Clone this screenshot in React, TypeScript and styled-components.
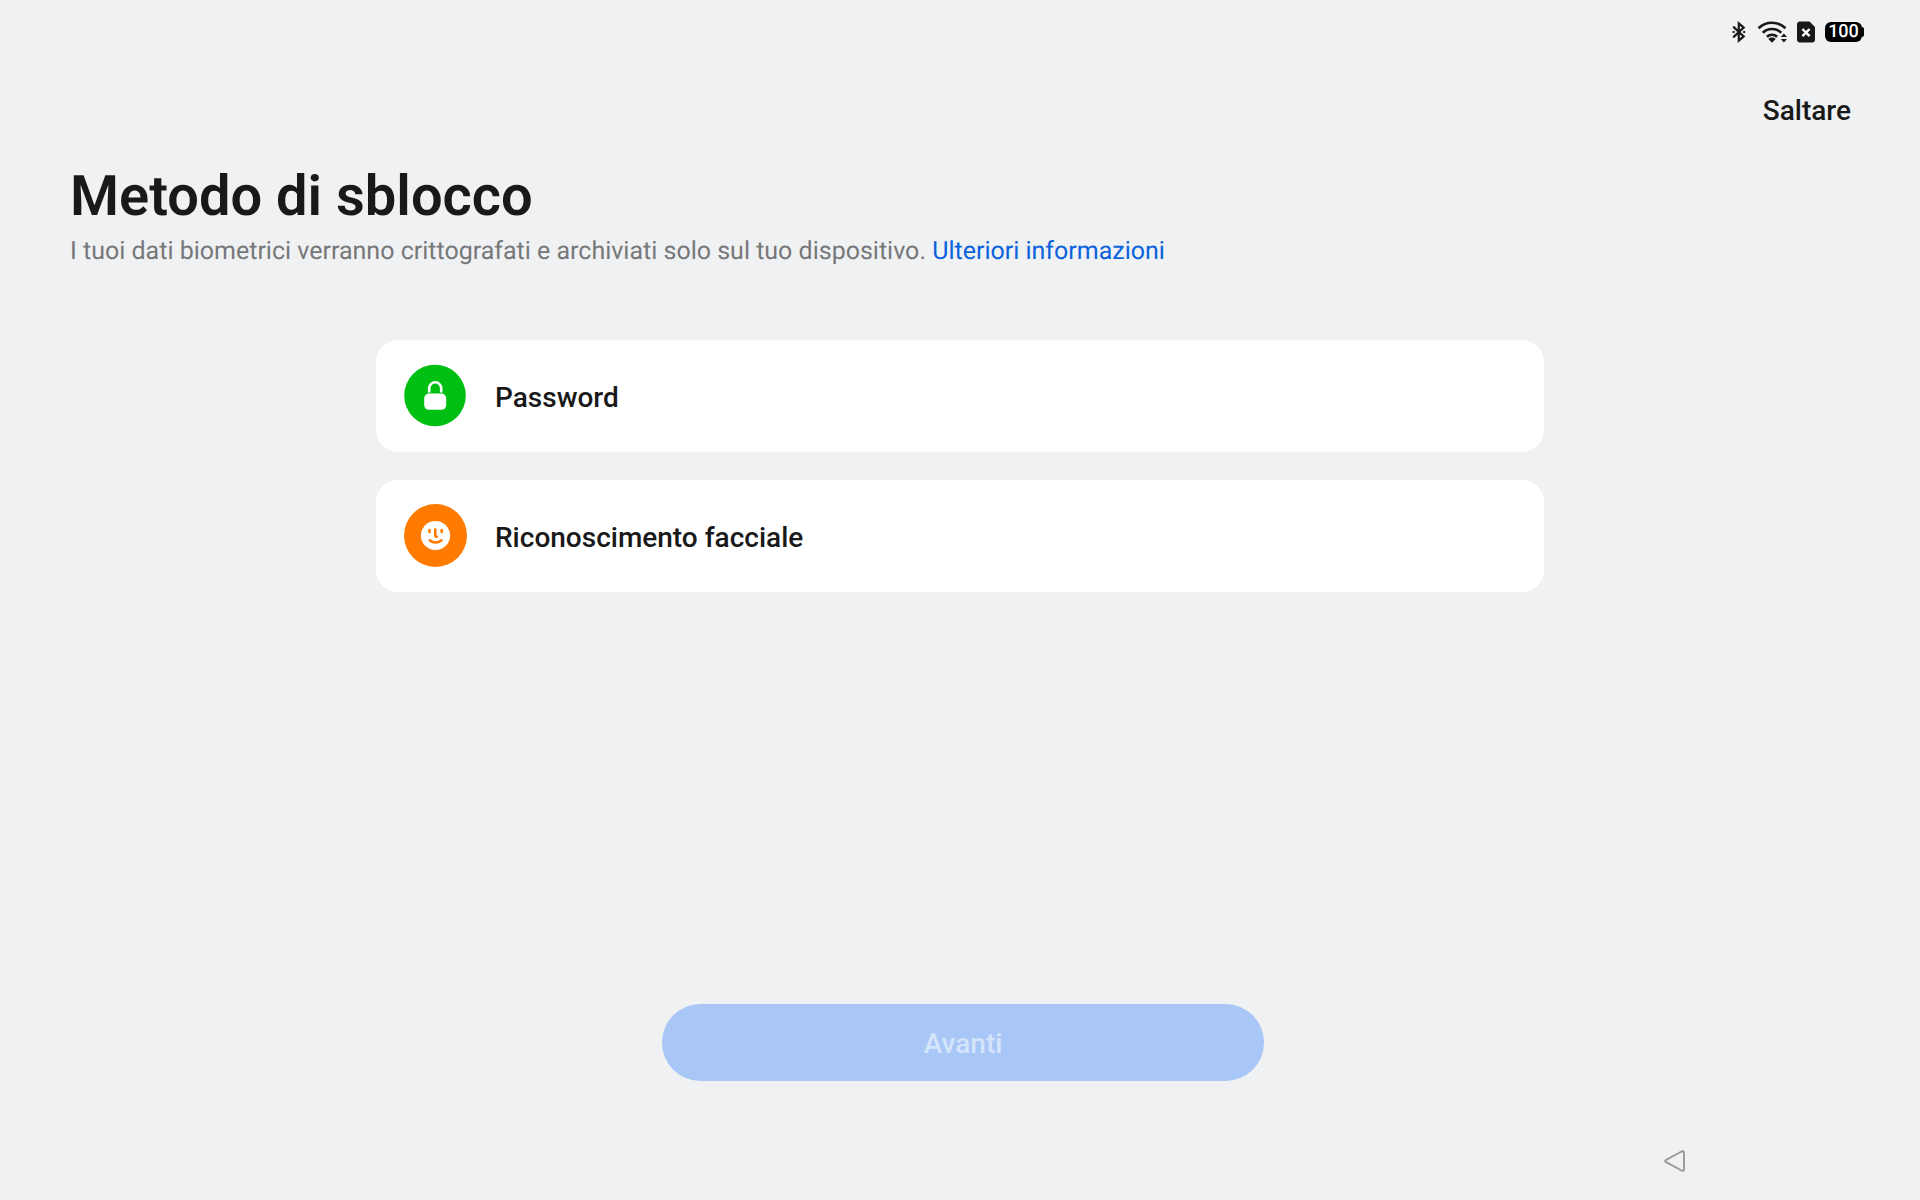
import React from 'react';
import styled, { createGlobalStyle } from 'styled-components';

const GlobalStyle = createGlobalStyle`
  *, *::before, *::after { box-sizing: border-box; }
  body {
    margin: 0;
    background: #eff1f3;
    color: #191919;
    font-family: Roboto, "Noto Sans", sans-serif;
    text-rendering: geometricPrecision;
    -webkit-font-smoothing: antialiased;
  }
  button { font: inherit; color: inherit; border: 0; cursor: pointer; }
  svg { display: block; flex: none; }
`;

const Screen = styled.div`
  display: flex;
  flex-direction: column;
  min-height: 100vh;
`;

const StatusBar = styled.div`
  display: flex;
  justify-content: flex-end;
  align-items: center;
  height: 63px;
  padding: 0 56px 0 0;
`;

const StatusIcons = styled.div`
  display: flex;
  align-items: center;
  gap: 10px;
`;

const Battery = styled.div`
  display: flex;
  align-items: center;
`;

const BatteryLevel = styled.span`
  display: block;
  width: 37px;
  border-radius: 6px;
  background: #000;
  color: #fff;
  font-size: 18px;
  font-weight: 500;
  line-height: 20px;
  text-align: center;
`;

const BatteryTip = styled.span`
  width: 2px;
  height: 10px;
  border-radius: 0 2px 2px 0;
  background: #000;
`;

const TopBar = styled.header`
  display: flex;
  justify-content: flex-end;
  padding: 30px 69px 0;
`;

const SkipButton = styled.button`
  padding: 0;
  background: none;
  font-size: 28px;
  font-weight: 500;
  line-height: 36px;
`;

const Heading = styled.div`
  padding: 31px 70px 0;
`;

const Title = styled.h1`
  margin: 0;
  font-size: 56px;
  font-weight: 600;
  line-height: 72px;
`;

const Description = styled.p`
  margin: 0;
  color: #767779;
  font-size: 25px;
  line-height: 40px;
`;

const MoreLink = styled.a`
  color: #0b62dd;
  text-decoration: none;
`;

const Methods = styled.main`
  display: flex;
  flex: 1;
  flex-direction: column;
  gap: 28px;
  width: 61%;
  max-width: 1168px;
  margin: 0 auto;
  padding: 68px 0 40px;
`;

const MethodButton = styled.button`
  display: flex;
  align-items: center;
  gap: 28px;
  height: 112px;
  padding: 0 28px 2px;
  border-radius: 22px;
  background: #fff;
  font-size: 28px;
  font-weight: 500;
  line-height: 36px;
  text-align: left;
`;

const MethodLabel = styled.span`
  padding-top: 5px;
`;

const Footer = styled.footer`
  display: flex;
  justify-content: center;
  padding: 0 0 0 6px;
`;

const NextButton = styled.button`
  width: 602px;
  max-width: 90%;
  height: 77px;
  padding: 2px 0 0;
  border-radius: 39px;
  background: #a8c6f6;
  color: #d4e4fb;
  font-size: 28px;
  font-weight: 500;
  cursor: default;
`;

const NavBar = styled.nav`
  display: flex;
  justify-content: flex-end;
  align-items: flex-end;
  height: 119px;
  padding: 0 234px 28px 0;
`;

const BackButton = styled.button`
  padding: 0;
  background: none;
`;

function BluetoothIcon() {
  return (
    <svg width="15" height="22" viewBox="0 0 15 22" fill="none" stroke="#191919" strokeWidth="2.200">
      <path d="M1.200 5.600 11.700 15.400 6.800 19.600V2.400l4.900 4.200L1.200 16.400" />
      <path d="M.6 11h2M11.200 11h2" strokeWidth="1.800" />
    </svg>
  );
}

function WifiIcon() {
  return (
    <svg width="30" height="22" viewBox="0 0 30 22" fill="none" stroke="#191919" strokeWidth="2.700">
      <path d="M1.500 7.300C9-.1 21-.1 28.500 7.300" />
      <path d="M5.800 11.800c5.100-5.100 13.300-5.100 18.400 0" />
      <path d="M9.900 15.800c3-2.700 7.200-2.700 10.200 0" />
      <path d="M15 21.800 11.300 18c2.200-1.900 5.200-1.900 7.400 0z" fill="#191919" stroke="none" />
      <path d="M26.900 12.600 30 16h-6.200zM26.900 21.400 30 18h-6.200z" fill="#191919" stroke="none" />
    </svg>
  );
}

function SimErrorIcon() {
  return (
    <svg width="18" height="22" viewBox="0 0 18 22">
      <path d="M3 .5h9.500L18 6v12.500a3 3 0 0 1-3 3H3a3 3 0 0 1-3-3v-15a3 3 0 0 1 3-3z" fill="#191919" />
      <path d="m5.400 8 7.200 7.200m0-7.200-7.200 7.200" stroke="#fff" strokeWidth="2.400" />
    </svg>
  );
}

function PasswordIcon() {
  return (
    <svg width="63" height="63" viewBox="0 0 63 63">
      <circle cx="31" cy="31.500" r="30.800" fill="#00bf13" />
      <path d="M25.200 28.600v-4.300a6 6 0 0 1 12 0v4.300" fill="none" stroke="#fff" strokeWidth="2.600" />
      <rect x="20.200" y="29.500" width="22" height="16.300" rx="4.800" fill="#fff" />
    </svg>
  );
}

function FaceIcon() {
  return (
    <svg width="63" height="63" viewBox="0 0 63 63">
      <circle cx="31.500" cy="31.500" r="31.500" fill="#ff7a00" />
      <circle cx="31.500" cy="31.500" r="14.600" fill="#fff" />
      <g fill="none" stroke="#ff7a00" strokeWidth="2.600" strokeLinecap="round" strokeLinejoin="round">
        <path d="M25.500 26v2M37.700 26v2" />
        <path d="M31.300 25.500v6q0 1.200 1.600 1.200" />
        <path d="M25.800 36.300c3.200 2.900 8.400 2.900 11.600 0" />
      </g>
    </svg>
  );
}

function BackIcon() {
  return (
    <svg width="22" height="22" viewBox="0 0 22 22" fill="none" stroke="#98999b" strokeWidth="1.900" strokeLinejoin="round">
      <path d="M2.100 9.800 17.600 1.500q2.400-1 2.400 1.300v16.400q0 2.300-2.400 1.300L2.100 12.200q-2-1.200 0-2.400z" />
    </svg>
  );
}

const methods = [
  { label: 'Password', Icon: PasswordIcon },
  { label: 'Riconoscimento facciale', Icon: FaceIcon },
];

export default function App() {
  return (
    <Screen>
      <GlobalStyle />
      <StatusBar>
        <StatusIcons>
          <BluetoothIcon />
          <WifiIcon />
          <SimErrorIcon />
          <Battery>
            <BatteryLevel>100</BatteryLevel>
            <BatteryTip />
          </Battery>
        </StatusIcons>
      </StatusBar>
      <TopBar>
        <SkipButton type="button">Saltare</SkipButton>
      </TopBar>
      <Heading>
        <Title>Metodo di sblocco</Title>
        <Description>
          I tuoi dati biometrici verranno crittografati e archiviati solo sul tuo dispositivo.{' '}
          <MoreLink href="#informazioni">Ulteriori informazioni</MoreLink>
        </Description>
      </Heading>
      <Methods>
        {methods.map(({ label, Icon }) => (
          <MethodButton key={label} type="button">
            <Icon />
            <MethodLabel>{label}</MethodLabel>
          </MethodButton>
        ))}
      </Methods>
      <Footer>
        <NextButton type="button" disabled>Avanti</NextButton>
      </Footer>
      <NavBar>
        <BackButton type="button" aria-label="Indietro">
          <BackIcon />
        </BackButton>
      </NavBar>
    </Screen>
  );
}
